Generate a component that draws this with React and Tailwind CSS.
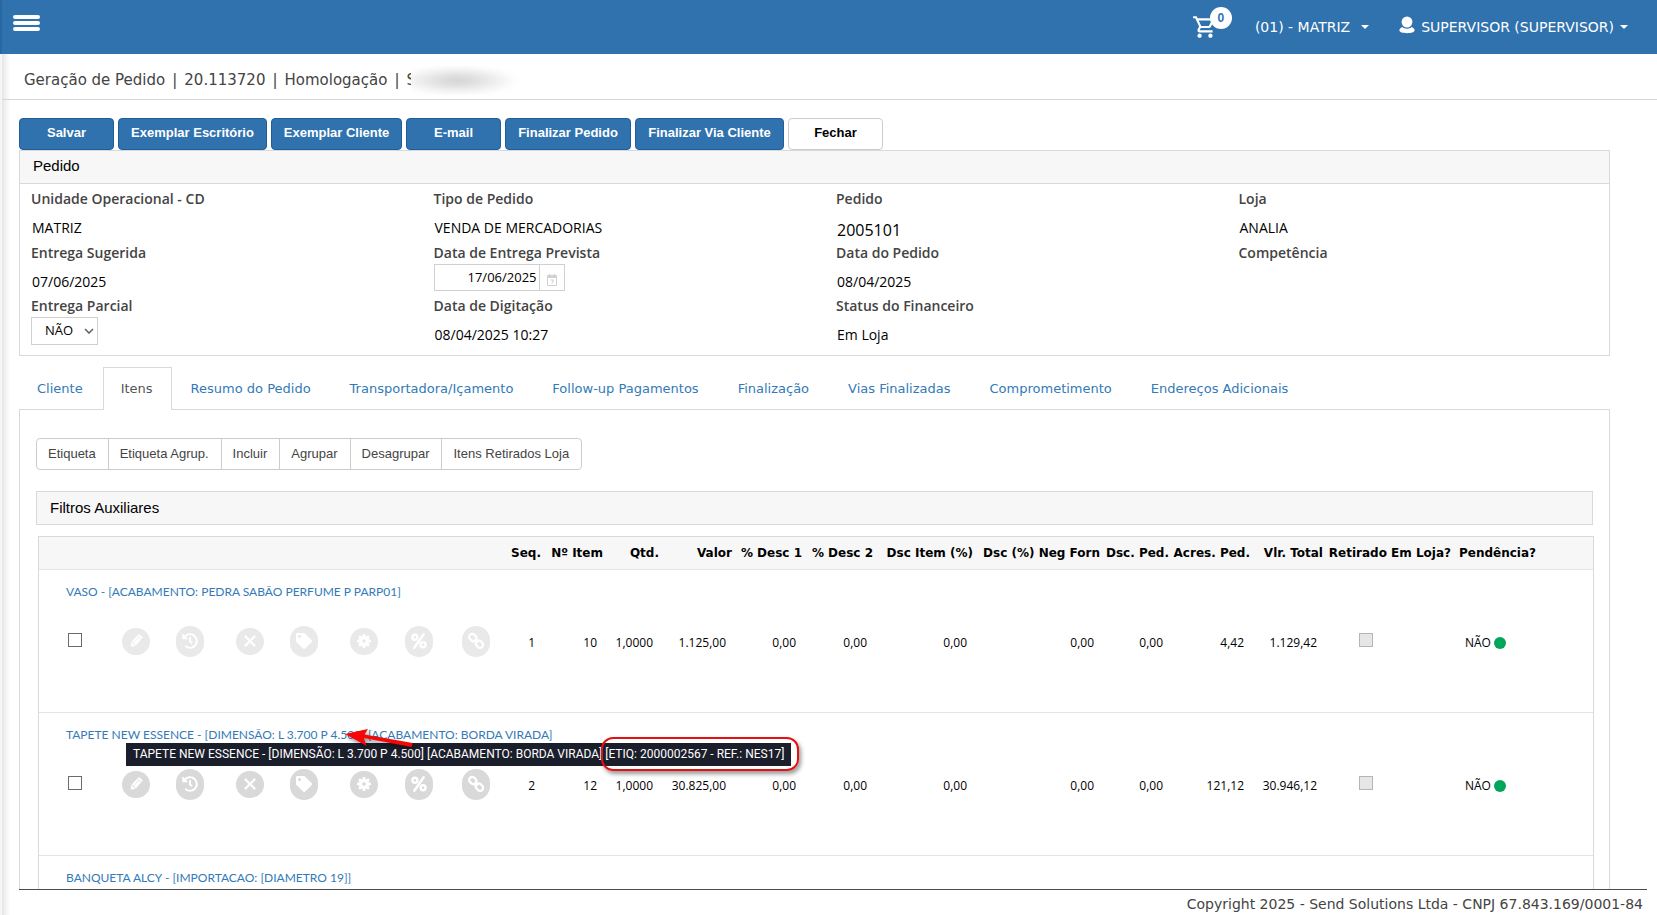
import React from "react";
import { FaHistory, FaTag } from "react-icons/fa";
import { MdOutlineShoppingCart } from "react-icons/md";

const verdana = "font-['DejaVu_Sans',sans-serif]";
const arial = "font-['Liberation_Sans',sans-serif]";
const humanist = "font-['Open_Sans',sans-serif]";

const PencilIcon = () => (
  <svg viewBox="0 0 16 16" className="size-4" aria-hidden="true">
    <g transform="rotate(42 8 8)" fill="currentColor">
      <path d="M5.200 1.800a1 1 0 0 1 1-1h3.600a1 1 0 0 1 1 1v1.200H5.200z" />
      <path d="M5.200 3.600h2v7.800h-2zM7.700 3.600h3.100v7.800H7.700z" />
      <path d="M5.200 12h5.600L8.800 15H7.200z" />
    </g>
  </svg>
);

const CloseIcon = () => (
  <svg viewBox="0 0 16 16" className="size-4" aria-hidden="true">
    <path d="M3.500 3.500l9 9M12.500 3.500l-9 9" stroke="currentColor" strokeWidth="2.200" strokeLinecap="round" />
  </svg>
);

const GearIcon = () => (
  <svg viewBox="0 0 16 16" className="size-4" aria-hidden="true">
    <circle cx="8" cy="8" r="3.600" fill="none" stroke="currentColor" strokeWidth="3.600" />
    {[0, 45, 90, 135].map((a) => (
      <path key={a} transform={`rotate(${a} 8 8)`} d="M6.700 1h2.600v3H6.700zM6.700 12h2.600v3H6.700z" fill="currentColor" />
    ))}
  </svg>
);

const PercentIcon = () => (
  <svg viewBox="0 0 16 16" className="size-4" fill="none" stroke="currentColor" aria-hidden="true">
    <circle cx="3.900" cy="4.300" r="2.500" strokeWidth="2.400" />
    <circle cx="12.100" cy="11.700" r="2.500" strokeWidth="2.400" />
    <path d="M12.700 1.200L3.300 14.800" strokeWidth="2.400" strokeLinecap="round" />
  </svg>
);

const LinkIcon = () => (
  <svg viewBox="0 0 18 18" className="size-[18px]" aria-hidden="true">
    <g transform="rotate(45 9 9)" fill="none" stroke="currentColor" strokeWidth="2.300">
      <rect x=".4" y="5.800" width="8" height="6" rx="3" />
      <rect x="9.600" y="5.800" width="8" height="6" rx="3" />
      <path d="M6.500 8.800h5" strokeWidth="1.800" />
    </g>
  </svg>
);

const UserIcon = () => (
  <svg viewBox="0 0 16 18" className="h-[18px] w-4" fill="#fff" aria-hidden="true">
    <ellipse cx="8" cy="6" rx="5.400" ry="5.600" />
    <path d="M3.200 11C1.500 11.800.4 13 .4 14.300.4 16.300 3.800 17.200 8 17.200s7.600-.9 7.600-2.900c0-1.300-1.100-2.500-2.800-3.300-1.200 1.100-2.900 1.700-4.800 1.700S4.400 12.100 3.200 11z" />
  </svg>
);

const Caret = () => (
  <svg viewBox="0 0 8 4" className="h-1 w-2" fill="#fff" aria-hidden="true">
    <path d="M0 0h8L4 4z" />
  </svg>
);

const CalendarIcon = () => (
  <svg viewBox="0 0 12 12" className="size-3" aria-hidden="true">
    <path d="M1.500 1.500h9v10h-9z" fill="none" stroke="#d2d2d2" />
    <path d="M1 2h10v2H1z" fill="#d2d2d2" />
    <path d="M3.500 0v3M8.500 0v3" stroke="#d2d2d2" strokeWidth="1.500" />
    <path d="M4.500 6h3L6 9.500" fill="none" stroke="#d2d2d2" />
  </svg>
);

const actions = [
  { label: "Editar", Icon: PencilIcon, size: "h-[27px]", col: "w-[54px]" },
  { label: "Histórico", Icon: () => <FaHistory className="size-4" />, size: "h-[31px]", col: "w-[60px]" },
  { label: "Excluir", Icon: CloseIcon, size: "h-[27px]", col: "w-[54px]" },
  { label: "Etiqueta", Icon: () => <FaTag className="size-4" />, size: "h-[31px]", col: "w-[60px]" },
  { label: "Configurar", Icon: GearIcon, size: "h-[27px]", col: "w-[55px]" },
  { label: "Desconto", Icon: PercentIcon, size: "h-[31px]", col: "w-[57px]" },
  { label: "Vincular", Icon: LinkIcon, size: "h-[31px]", col: "w-[54px]" },
];

const columns = [
  { label: "Seq.", key: "seq", col: "w-[41px]" },
  { label: "Nº Item", key: "item", col: "w-[62px]" },
  { label: "Qtd.", key: "qtd", col: "w-[56px]" },
  { label: "Valor", key: "valor", col: "w-[73px]" },
  { label: "% Desc 1", key: "d1", col: "w-[70px]" },
  { label: "% Desc 2", key: "d2", col: "w-[71px]" },
  { label: "Dsc Item (%)", key: "di", col: "w-[100px]" },
  { label: "Dsc (%) Neg Forn", key: "dn", col: "w-[127px]" },
  { label: "Dsc. Ped.", key: "dp", col: "w-[69px]" },
  { label: "Acres. Ped.", key: "ap", col: "w-[81px]" },
  { label: "Vlr. Total", key: "total", col: "w-[73px]" },
];

const items = [
  {
    title: "VASO - [ACABAMENTO: PEDRA SABÃO PERFUME P PARP01]",
    tone: "bg-[#e9e9e9]",
    seq: "1", item: "10", qtd: "1,0000", valor: "1.125,00", d1: "0,00", d2: "0,00", di: "0,00", dn: "0,00", dp: "0,00", ap: "4,42", total: "1.129,42",
  },
  {
    title: "TAPETE NEW ESSENCE - [DIMENSÃO: L 3.700 P 4.500] [ACABAMENTO: BORDA VIRADA]",
    tip: ["TAPETE NEW ESSENCE - [DIMENSÃO: L 3.700 P 4.500] [ACABAMENTO: BORDA VIRADA]", "[ETIQ: 2000002567 - REF.: NES17]"],
    tone: "bg-[#d9d9d9]",
    seq: "2", item: "12", qtd: "1,0000", valor: "30.825,00", d1: "0,00", d2: "0,00", di: "0,00", dn: "0,00", dp: "0,00", ap: "121,12", total: "30.946,12",
  },
];

function Tooltip({ parts }) {
  return (
    <div role="tooltip" className="absolute top-[30px] left-[87px] z-10 flex h-[23px] items-center gap-[3px] bg-[#1b1e2b] px-[7px] font-['Roboto',sans-serif] text-[12px] whitespace-nowrap text-white">
      <span>{parts[0]}</span>
      <span className="relative">
        {parts[1]}
        <span className="absolute -inset-y-2 -right-[15px] -left-1 rounded-xl border-2 border-[#e31212] shadow-[2px_3px_4px_rgba(0,0,0,0.4)]" />
      </span>
      <svg viewBox="0 0 80 32" className="absolute -top-[18px] left-[215px] h-8 w-20 drop-shadow-[2px_3px_2px_rgba(0,0,0,0.4)]" aria-hidden="true">
        <path d="M4 9l23-5-3.500 5.500 48 8.500-.8 4-48-9 3 8z" fill="#f80606" />
      </svg>
    </div>
  );
}

function TitleRow({ item }) {
  return (
    <tr className="border-t border-[#e4e4e4]">
      <td colSpan={21} className="relative h-[43px] pt-[3px] pl-[27px] font-['Lato',sans-serif] text-[12px] text-[#337ab7]">
        <a href="#item">{item.title}</a>
        {item.tip && <Tooltip parts={item.tip} />}
      </td>
    </tr>
  );
}

function DataRow({ item }) {
  return (
    <tr className="h-[100px] align-top text-[12px]">
      <td className="pt-[21px] text-center leading-none">
        <input type="checkbox" aria-label={`Selecionar item ${item.seq}`} className="size-[14px] appearance-none border border-[#6b6b6b] bg-white" />
      </td>
      {actions.map(({ label, Icon, size }) => (
        <td key={label} className="p-0">
          <div className="flex h-[58px] items-center pl-3">
            <button type="button" aria-label={label} className={`flex w-7 items-center justify-center rounded-[14px] text-white ${size} ${item.tone}`}>
              <Icon />
            </button>
          </div>
        </td>
      ))}
      {columns.map((c) => (
        <td key={c.key} className="pr-[10px] text-right leading-[62px] whitespace-nowrap">{item[c.key]}</td>
      ))}
      <td className="pt-[21px] pl-8 leading-none">
        <input type="checkbox" disabled aria-label={`Retirado em loja, item ${item.seq}`} className="size-[14px] appearance-none border border-[#b5b5b5] bg-[#e6e6e6]" />
      </td>
      <td className="pl-[10px]">
        <div className="flex h-[62px] items-center gap-[3px]">
          NÃO <span className="size-3 rounded-full bg-[#00a65a]" />
        </div>
      </td>
    </tr>
  );
}

const primary = [
  ["Salvar", "w-[95px]"],
  ["Exemplar Escritório", "w-[149px]"],
  ["Exemplar Cliente", "w-[131px]"],
  ["E-mail", "w-[95px]"],
  ["Finalizar Pedido", "w-[126px]"],
  ["Finalizar Via Cliente", "w-[149px]"],
];

const tabs = ["Cliente", "Itens", "Resumo do Pedido", "Transportadora/Içamento", "Follow-up Pagamentos", "Finalização", "Vias Finalizadas", "Comprometimento", "Endereços Adicionais"];
const tools = ["Etiqueta", "Etiqueta Agrup.", "Incluir", "Agrupar", "Desagrupar", "Itens Retirados Loja"];

function Field({ label, value, big, htmlFor, children }) {
  const Tag = htmlFor ? "label" : "div";
  return (
    <div>
      <Tag htmlFor={htmlFor} className="block text-[14px] leading-[22px] font-semibold text-[#444]">{label}</Tag>
      {children || <div className={`pt-[6px] pl-px text-black ${big ? "text-[16px] leading-7 font-medium" : "text-[14px] leading-6"}`}>{value}</div>}
    </div>
  );
}

export default function App() {
  return (
    <div className={`flex h-screen flex-col overflow-hidden bg-white text-black ${verdana}`}>
      <header className="flex h-[54px] shrink-0 items-center border-l-2 border-[#2767a2] bg-[#3072ae] pr-[29px] pl-[11px] text-[14px] text-white">
        <button type="button" aria-label="Menu" className="mb-2 flex w-[27px] flex-col gap-[2px]">
          <span className="h-1 rounded-sm bg-white" />
          <span className="h-1 rounded-sm bg-white" />
          <span className="h-1 rounded-sm bg-white" />
        </button>
        <button type="button" aria-label="Carrinho" className="relative ml-auto h-[54px] w-10">
          <MdOutlineShoppingCart className="size-[26px]" />
          <span className={`absolute top-[7px] left-[18px] flex size-[22px] items-center justify-center rounded-full bg-white text-[12px] font-bold text-[#3072ae] ${arial}`}>0</span>
        </button>
        <button type="button" className="ml-[23px] flex items-center gap-[11px]">(01) - MATRIZ <Caret /></button>
        <button type="button" className="ml-[30px] flex items-center gap-[6px]">
          <span className="mb-1"><UserIcon /></span>
          <span>SUPERVISOR (SUPERVISOR)</span>
          <Caret />
        </button>
      </header>

      <div className="flex min-h-0 flex-1">
        <div className="w-[10px] shrink-0 border-l-2 border-[#f5f5f5] bg-linear-to-r from-[#e6e6e6] to-white" />
        <div className="flex min-w-0 flex-1 flex-col">
          <div className="-ml-2 flex h-[46px] shrink-0 items-center border-b border-[#d6d6d6] pt-[7px] pl-[22px]">
            <h1 className="flex gap-[7px] text-[15px] text-[#444]">
              <span>Geração de Pedido</span>
              <span>|</span>
              <span>20.113720</span>
              <span>|</span>
              <span>Homologação</span>
              <span>|</span>
              <span>S</span>
            </h1>
            <span className="relative -ml-[5px] h-[29px] w-28 overflow-hidden bg-white">
              <span className="-ml-4 block h-[29px] w-[124px] bg-radial from-[#cfcfcf] to-white to-70% blur-[3px]" />
            </span>
          </div>

          <main className="mr-[10px] ml-[9px] min-h-0 flex-1 overflow-hidden border-b border-[#4c4c4c] pt-[18px] pr-[37px]">
            <div className={`flex gap-1 text-[13px] font-bold ${arial}`}>
              {primary.map(([label, width]) => (
                <button key={label} type="button" className={`h-8 rounded border border-[#1f5f99] bg-[#3072ae] pb-[2px] whitespace-nowrap text-white ${width}`}>{label}</button>
              ))}
              <button type="button" className="h-8 w-[95px] rounded border border-[#ccc] bg-white pb-[2px]">Fechar</button>
            </div>

            <section className="border border-[#d9d9d9]">
              <h2 className={`flex h-[33px] items-center border-b border-[#d9d9d9] bg-[#f7f7f7] pb-px pl-[13px] text-[15px] ${arial}`}>Pedido</h2>
              <div className={`grid grid-cols-4 gap-x-8 pt-1 pl-[11px] ${humanist}`}>
                <div className="h-[54px]"><Field label="Unidade Operacional - CD" value="MATRIZ" /></div>
                <div className="h-[54px]"><Field label="Tipo de Pedido" value="VENDA DE MERCADORIAS" /></div>
                <div className="h-[54px]"><Field label="Pedido" value="2005101" big /></div>
                <div className="h-[54px]"><Field label="Loja" value="ANALIA" /></div>
                <div className="h-[53px]"><Field label="Entrega Sugerida" value="07/06/2025" /></div>
                <Field label="Data de Entrega Prevista" htmlFor="prevista">
                  <div className="flex h-[27px] w-[131px] border border-[#d0d0d0] text-[13px]">
                    <input id="prevista" type="text" defaultValue="17/06/2025" className="w-0 flex-1 pr-[2px] text-right outline-none" />
                    <button type="button" aria-label="Abrir calendário" className="flex w-[25px] items-center justify-center border-l border-[#d0d0d0] pt-1">
                      <CalendarIcon />
                    </button>
                  </div>
                </Field>
                <Field label="Data do Pedido" value="08/04/2025" />
                <Field label="Competência" value="" />
                <div className="h-[60px]">
                  <Field label="Entrega Parcial" htmlFor="parcial">
                    <div className="relative w-[67px]">
                      <select id="parcial" className="h-7 w-full appearance-none border border-[#d0d0d0] bg-white pl-[13px] text-[13px]">
                        <option>NÃO</option>
                      </select>
                      <svg viewBox="0 0 10 6" className="pointer-events-none absolute top-[11px] right-1 h-[6px] w-[10px]" aria-hidden="true">
                        <path d="M1 1l4 4 4-4" fill="none" stroke="#666" strokeWidth="1.600" />
                      </svg>
                    </div>
                  </Field>
                </div>
                <Field label="Data de Digitação" value="08/04/2025 10:27" />
                <Field label="Status do Financeiro" value="Em Loja" />
              </div>
            </section>

            <nav className="mt-[11px] -ml-px flex text-[13px]">
              {tabs.map((t) =>
                t === "Itens" ? (
                  <a key={t} href="#itens" className="-mb-px flex h-[43px] items-center border border-b-0 border-[#d9d9d9] bg-white pr-[18px] pl-[17px] text-[#555]">{t}</a>
                ) : (
                  <a key={t} href="#aba" className="flex h-[42px] items-center pt-[2px] pr-5 pl-[19px] text-[#337ab7]">{t}</a>
                )
              )}
            </nav>

            <section className="border border-[#d9d9d9] px-4 pt-7">
              <div className={`inline-flex h-8 divide-x divide-[#ccc] rounded border border-[#ccc] text-[13px] text-[#444] ${arial}`}>
                {tools.map((t) => (
                  <button key={t} type="button" className="pr-3 pl-[11px]">{t}</button>
                ))}
              </div>
              <h2 className={`mt-[21px] flex h-[34px] items-center border border-[#d9d9d9] bg-[#f7f7f7] pl-[13px] text-[15px] ${arial}`}>Filtros Auxiliares</h2>

              <div className="mt-[11px] -mr-px ml-[2px] border-x border-t border-[#d9d9d9]">
                <table className={`w-full table-fixed border-collapse ${humanist}`}>
                  <colgroup>
                    <col className="w-[71px]" />
                    {actions.map((a) => <col key={a.label} className={a.col} />)}
                    {columns.map((c) => <col key={c.key} className={c.col} />)}
                    <col className="w-[128px]" />
                    <col />
                  </colgroup>
                  <thead>
                    <tr className={`h-8 bg-[#f7f7f7] text-[12px] font-bold ${verdana}`}>
                      <td colSpan={8} />
                      {columns.map((c) => (
                        <th key={c.key} className="pr-1 text-right whitespace-nowrap">{c.label}</th>
                      ))}
                      <th className="pr-1 text-right whitespace-nowrap">Retirado Em Loja?</th>
                      <th className="pl-1 text-left">Pendência?</th>
                    </tr>
                  </thead>
                  <tbody>
                    {items.map((item) => (
                      <React.Fragment key={item.seq}>
                        <TitleRow item={item} />
                        <DataRow item={item} />
                      </React.Fragment>
                    ))}
                    <TitleRow item={{ title: "BANQUETA ALCY - [IMPORTACAO: [DIAMETRO 19]]" }} />
                  </tbody>
                </table>
              </div>
            </section>
          </main>

          <footer className="h-[25px] shrink-0 pr-[14px] text-right text-[14px] leading-7 text-[#444]">
            Copyright 2025 - Send Solutions Ltda - CNPJ 67.843.169/0001-84
          </footer>
        </div>
      </div>
    </div>
  );
}
